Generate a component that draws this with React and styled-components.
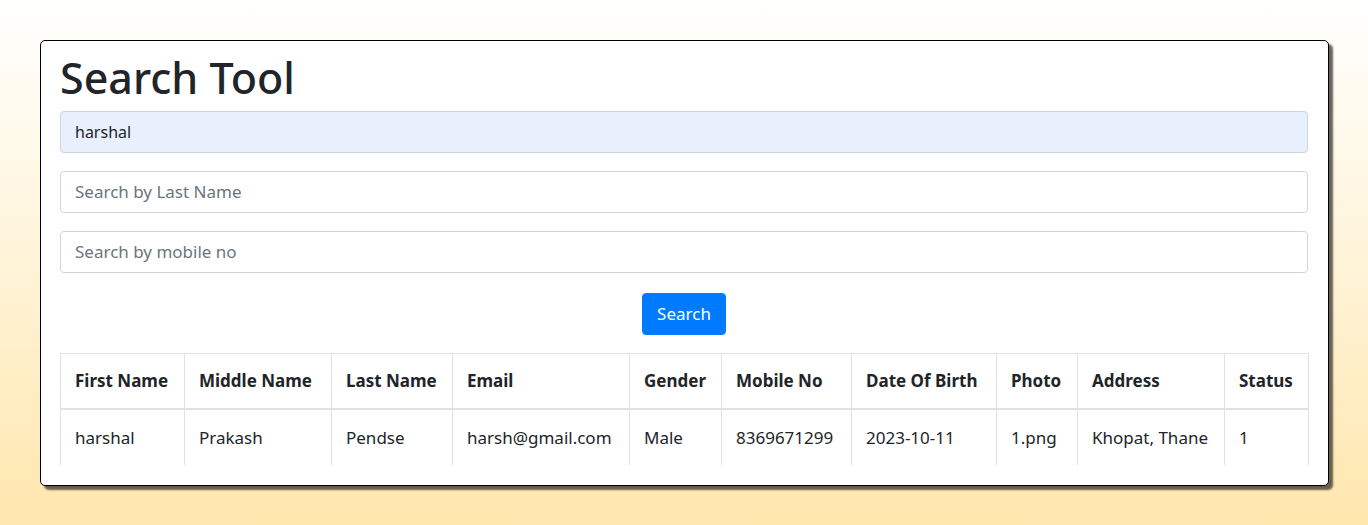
import styled, { createGlobalStyle } from "styled-components";

const GlobalStyle = createGlobalStyle`
  * { box-sizing: border-box; }
  html, body {
    margin: 0;
    padding: 0;
  }
  body {
    min-height: 525px;
    font-family: "Noto Sans", "Open Sans", sans-serif;
    color: #212529;
    background: linear-gradient(180deg, #ffffff 0%, #fff5dc 45%, #ffe6ad 100%);
  }
`;

const Page = styled.div`
  padding: 40px 39px 39px 40px;
`;

const Card = styled.div`
  background: #fff;
  border: 1px solid #000;
  border-radius: 5px;
  box-shadow: 4px 4px 2px rgba(40, 36, 30, 0.7);
  padding: 11px 20px 20px 19px;
  overflow: hidden;
`;

const Title = styled.h1`
  margin: 0 0 7px 0;
  font-size: 43px;
  font-weight: 500;
  line-height: 1.2;
`;

const Field = styled.input`
  display: block;
  width: 100%;
  height: 42px;
  margin-bottom: 18px;
  padding: 0 14px;
  font-family: inherit;
  font-size: ${(p) => (p.$filled ? "16px" : "17px")};
  color: #212529;
  background: ${(p) => (p.$filled ? "#e8f0fe" : "#fff")};
  border: 1px solid #ced4da;
  border-radius: 4px;
  outline: none;

  &::placeholder {
    color: #6c757d;
  }
`;

const ButtonRow = styled.div`
  display: flex;
  justify-content: center;
  padding-top: 2px;
  margin-bottom: 18px;
`;

const Button = styled.button`
  height: 42px;
  padding: 0 14px;
  font-family: inherit;
  font-size: 17px;
  color: #fff;
  background: #007bff;
  border: 1px solid #007bff;
  border-radius: 4px;
`;

const Table = styled.table`
  width: 100%;
  table-layout: fixed;
  border-collapse: collapse;
  font-size: 17px;
`;

const Th = styled.th`
  height: 56px;
  padding: 0 14px;
  text-align: left;
  font-weight: 700;
  white-space: nowrap;
  border: 1px solid #dee2e6;
  border-bottom: 2px solid #dee2e6;
`;

const Td = styled.td`
  height: 56px;
  padding: 0 14px;
  white-space: nowrap;
  border-left: 1px solid #dee2e6;
  border-right: 1px solid #dee2e6;
`;

const columns = [
  ["First Name", 124, "harshal"],
  ["Middle Name", 147, "Prakash"],
  ["Last Name", 121, "Pendse"],
  ["Email", 177, "harsh@gmail.com"],
  ["Gender", 92, "Male"],
  ["Mobile No", 130, "8369671299"],
  ["Date Of Birth", 145, "2023-10-11"],
  ["Photo", 81, "1.png"],
  ["Address", 147, "Khopat, Thane"],
  ["Status", 84, "1"],
];

export default function App() {
  return (
    <>
      <GlobalStyle />
      <Page>
        <Card>
          <Title>Search Tool</Title>
          <Field $filled defaultValue="harshal" placeholder="Search by First Name" />
          <Field placeholder="Search by Last Name" />
          <Field placeholder="Search by mobile no" />
          <ButtonRow>
            <Button>Search</Button>
          </ButtonRow>
          <Table>
            <colgroup>
              {columns.map(([name, w]) => (
                <col key={name} style={{ width: w }} />
              ))}
            </colgroup>
            <thead>
              <tr>
                {columns.map(([name]) => (
                  <Th key={name}>{name}</Th>
                ))}
              </tr>
            </thead>
            <tbody>
              <tr>
                {columns.map(([name, , value]) => (
                  <Td key={name}>{value}</Td>
                ))}
              </tr>
            </tbody>
          </Table>
        </Card>
      </Page>
    </>
  );
}
